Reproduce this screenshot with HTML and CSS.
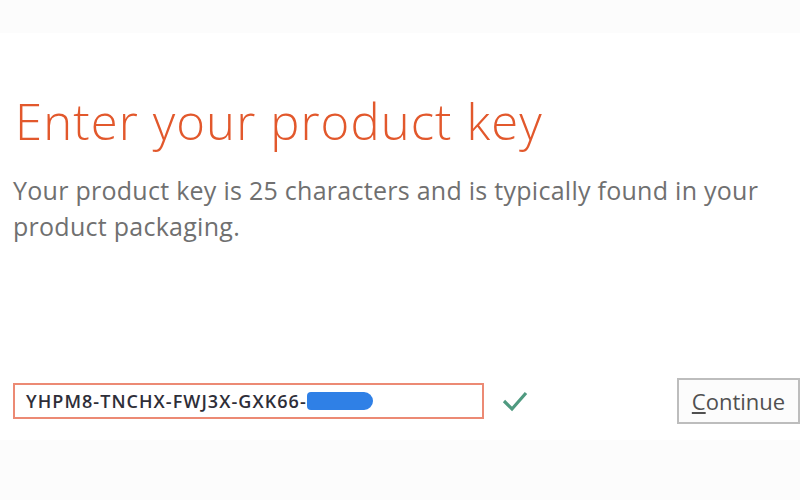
FILE: index.html
```html
<!DOCTYPE html>
<html lang="en">
<head>
    <meta charset="UTF-8">
    <meta name="viewport" content="width=device-width, initial-scale=1.0">
    <title>Enter your product key</title>
    <link rel="stylesheet" href="styles.css">
</head>
<body>
    <main class="panel">
        <h1 class="title">Enter your product key</h1>
        <p class="hint">Your product key is 25 characters and is typically found in your product packaging.</p>

        <div class="key-row">
            <div class="key-field">
                <span class="key-text">YHPM8-TNCHX-FWJ3X-GXK66-</span>
                <span class="redact"></span>
            </div>
            <svg class="check" width="28" height="24" viewBox="0 0 28 24">
                <path d="M3 12 L11 20 L25 4" fill="none" stroke="#4f9a80" stroke-width="3.2"/>
            </svg>
            <button type="button" class="continue"><u>C</u>ontinue</button>
        </div>
    </main>
</body>
</html>
```

FILE: styles.css
```css
body {
    margin: 0;
    padding: 0;
    background-color: #fcfcfc;
    font-family: 'Open Sans', sans-serif;
    color: #333;
}
.panel {
    margin-top: 33px;
    height: 407px;
    background: #fff;
    padding-left: 13px;
    box-sizing: border-box;
    display: flex;
    flex-direction: column;
}
.title {
    margin: 59px 0 0 2px;
    font-size: 49px;
    font-weight: 300;
    line-height: 1.2;
    letter-spacing: 1.1px;
    color: #e2582c;
}
.hint {
    margin: 21px 0 0 0;
    width: 780px;
    font-size: 25px;
    line-height: 36px;
    letter-spacing: 0.27px;
    color: #707070;
}
.key-row {
    display: flex;
    align-items: center;
    margin-top: 134px;
}
.key-field {
    width: 471px;
    height: 36px;
    box-sizing: border-box;
    border: 2px solid #ec8a74;
    display: flex;
    align-items: center;
    padding-left: 11px;
}
.key-text {
    font-size: 18px;
    font-weight: 600;
    color: #2e2e38;
    letter-spacing: 1.05px;
}
.redact {
    width: 66px;
    height: 18px;
    margin-left: 0;
    background: #2f80e6;
    border-radius: 4px 9px 9px 4px;
}
.check {
    margin-left: 17px;
}
.continue {
    margin-left: auto;
    width: 123px;
    height: 46px;
    background: #fcfcfc;
    border: 2px solid #bdbdbd;
    font-family: 'Open Sans', sans-serif;
    font-size: 22px;
    color: #505050;
    padding: 0;
}
```
